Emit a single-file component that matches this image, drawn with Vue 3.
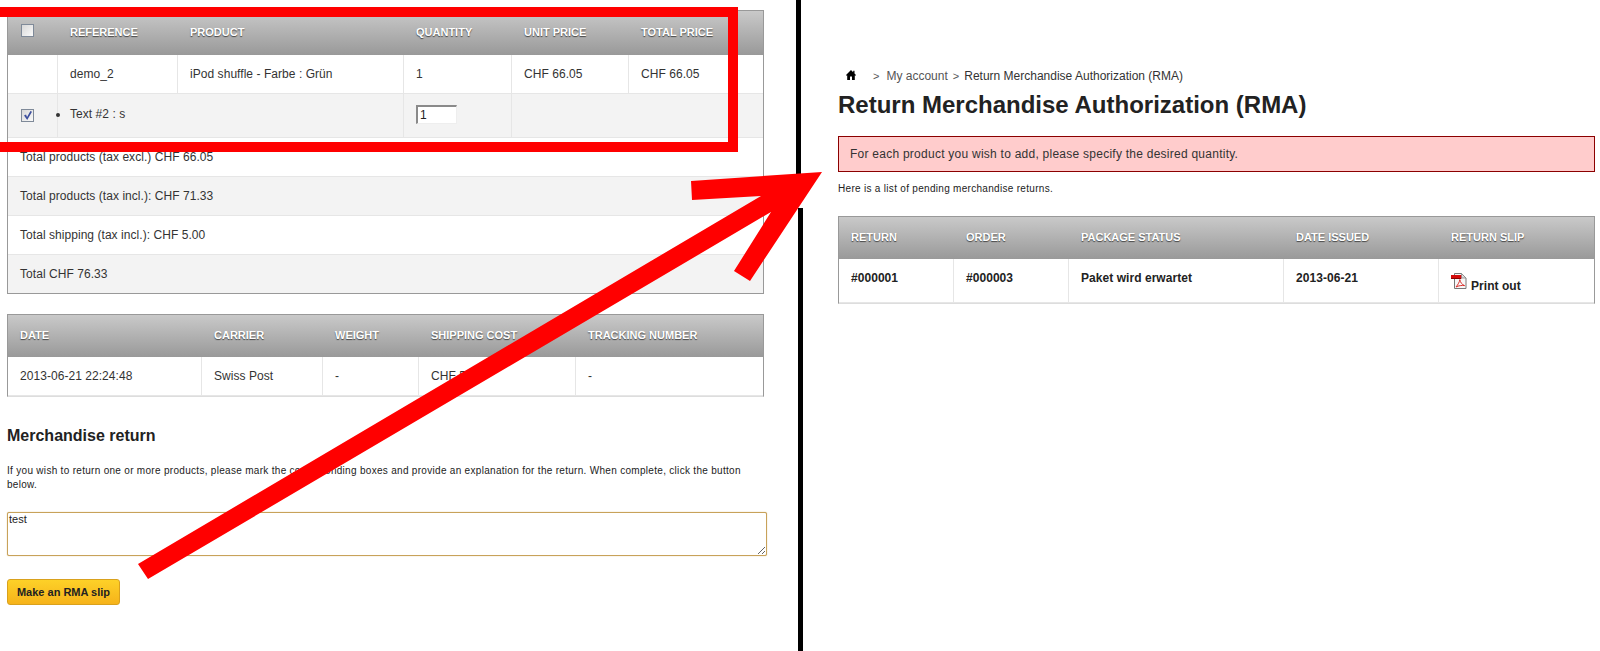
<script setup>
const orderHead = ['Reference', 'Product', 'Quantity', 'Unit price', 'Total price']
const totals = [
  'Total products (tax excl.) CHF 66.05',
  'Total products (tax incl.): CHF 71.33',
  'Total shipping (tax incl.): CHF 5.00',
  'Total CHF 76.33'
]
const shipHead = ['Date', 'Carrier', 'Weight', 'Shipping cost', 'Tracking number']
const shipRow = ['2013-06-21 22:24:48', 'Swiss Post', '-', 'CHF 5.00', '-']
const rmaHead = ['Return', 'Order', 'Package status', 'Date issued', 'Return slip']
const rmaRow = ['#000001', '#000003', 'Paket wird erwartet', '2013-06-21']
</script>

<template>
  <div class="page">
    <section class="left">
      <table class="grid order">
        <colgroup>
          <col class="o1" /><col class="o2" /><col class="o3" /><col class="o4" /><col class="o5" /><col class="o6" />
        </colgroup>
        <thead>
          <tr>
            <th><input type="checkbox" class="check" /></th>
            <th v-for="h in orderHead" :key="h">{{ h }}</th>
          </tr>
        </thead>
        <tbody>
          <tr class="r-main">
            <td></td>
            <td>demo_2</td>
            <td>iPod shuffle - Farbe : Grün</td>
            <td>1</td>
            <td>CHF 66.05</td>
            <td class="last">CHF 66.05</td>
          </tr>
          <tr class="r-custom alt">
            <td><input type="checkbox" class="check" checked /></td>
            <td colspan="2" class="custom"><ul><li>Text #2 : s</li></ul></td>
            <td><input type="text" class="qty" value="1" /></td>
            <td colspan="2" class="last"></td>
          </tr>
          <tr v-for="(t, i) in totals" :key="t" class="r-total" :class="{ alt: i % 2 === 1, end: i === 3 }">
            <td colspan="6" class="last">{{ t }}</td>
          </tr>
        </tbody>
      </table>

      <table class="grid ship">
        <colgroup>
          <col class="s1" /><col class="s2" /><col class="s3" /><col class="s4" /><col class="s5" />
        </colgroup>
        <thead>
          <tr><th v-for="h in shipHead" :key="h">{{ h }}</th></tr>
        </thead>
        <tbody>
          <tr class="r-main">
            <td v-for="(c, i) in shipRow" :key="i" :class="{ last: i === 4 }">{{ c }}</td>
          </tr>
        </tbody>
      </table>

      <h3 class="sub">Merchandise return</h3>
      <p class="note">If you wish to return one or more products, please mark the corresponding boxes and provide an explanation for the return. When complete, click the button below.</p>
      <textarea class="reason">test</textarea>
      <button type="button" class="make">Make an RMA slip</button>
    </section>

    <div class="divider">
      <span class="seg upper"></span>
      <span class="seg lower"></span>
    </div>

    <section class="right">
      <nav class="crumbs">
        <svg class="home" viewBox="0 0 10 10" width="10" height="10">
          <path d="M5 0 L7.2 2.2 V0.8 H8.5 V3.5 L10 5 V5.6 H8.8 V10 H6 V6.6 H4 V10 H1.2 V5.6 H0 V5 Z" fill="#000" />
        </svg>
        <span class="sep first">&gt;</span>
        <a class="acct">My account</a>
        <span class="sep">&gt;</span>
        <span class="here">Return Merchandise Authorization (RMA)</span>
      </nav>
      <h1 class="title">Return Merchandise Authorization (RMA)</h1>
      <div class="alert">For each product you wish to add, please specify the desired quantity.</div>
      <p class="note pending">Here is a list of pending merchandise returns.</p>
      <table class="grid rma">
        <colgroup>
          <col class="m1" /><col class="m2" /><col class="m3" /><col class="m4" /><col class="m5" />
        </colgroup>
        <thead>
          <tr><th v-for="h in rmaHead" :key="h">{{ h }}</th></tr>
        </thead>
        <tbody>
          <tr class="r-rma">
            <td v-for="c in rmaRow" :key="c">{{ c }}</td>
            <td class="last slip">
              <svg class="pdf" viewBox="0 0 16 16" width="16" height="16">
                <path d="M3.5 .5 H10.5 L15 5 V15.5 H3.5 Z" fill="#f7f7f7" stroke="#777" stroke-width="1" />
                <path d="M10.5 .5 V5 H15 Z" fill="#ddd" stroke="#888" stroke-width=".8" />
                <path d="M0 2 H10.2 V6 H0 Z" fill="#d40a0a" />
                <path d="M0 5 H10.2 V6 H0 Z" fill="#8c0000" />
                <path d="M5 14 C7 11.5 8.6 9 8.8 6.6 C9.4 9.5 11 11.6 13.6 12.6 C10.8 12.2 7.6 12.6 5 14 Z" fill="none" stroke="#d9302c" stroke-width="1" />
              </svg>
              <span>Print out</span>
            </td>
          </tr>
        </tbody>
      </table>
    </section>

    <svg class="marks" viewBox="0 0 1600 651" width="1600" height="651">
      <rect x="-20" y="12" width="753" height="135" fill="none" stroke="#f00" stroke-width="10" />
      <polygon
        points="138,564 761,196 692,200 691,181 822,172 750,281 734,271 771,212 148,579"
        fill="#f00"
      />
    </svg>
  </div>
</template>

<style scoped>
.page {
  position: relative;
  display: flex;
  width: 1600px;
  height: 651px;
  overflow: hidden;
  background: #fff;
  color: #222;
  font-family: "Liberation Sans", Arial, sans-serif;
  font-size: 12px;
}
.left {
  width: 789px;
  padding: 10px 0 0 7px;
  flex: none;
  display: flex;
  flex-direction: column;
  align-items: flex-start;
}
.divider {
  width: 7px;
  flex: none;
  display: flex;
  flex-direction: column;
}
.seg { display: block; width: 5px; background: #000; }
.upper { height: 174px; }
.lower { margin: 34px 0 0 2px; flex: 1; }
.right {
  width: 762px;
  padding: 67px 0 0 35px;
  flex: none;
}

.grid {
  table-layout: fixed;
  border-collapse: separate;
  border-spacing: 0;
  border: 1px solid #999;
  border-bottom-color: #ddd;
}
.order { width: 757px; border-bottom-color: #999; }
.ship { width: 757px; margin-top: 20px; }
.rma { width: 757px; margin-top: 20px; }
.o1 { width: 50px; } .o2 { width: 120px; } .o3 { width: 226px; } .o4 { width: 108px; } .o5 { width: 117px; } .o6 { width: 134px; }
.s1 { width: 194px; } .s2 { width: 121px; } .s3 { width: 96px; } .s4 { width: 157px; } .s5 { width: 187px; }
.m1 { width: 115px; } .m2 { width: 115px; } .m3 { width: 215px; } .m4 { width: 155px; } .m5 { width: 155px; }

th {
  height: 44px;
  padding: 0 0 2px 12px;
  text-align: left;
  font-size: 11px;
  font-weight: 700;
  color: #fff;
  text-transform: uppercase;
  text-shadow: 0 1px 1px #444;
  background: linear-gradient(#c9c9c9, #999);
  box-sizing: border-box;
}
.order th:first-child { padding-left: 13px; padding-bottom: 6px; }
.ship th, .rma th { height: 42px; }

td {
  padding: 0 0 0 12px;
  font-size: 12px;
  letter-spacing: .05px;
  box-sizing: border-box;
  border-right: 1px solid #e6e6e6;
  border-bottom: 1px solid #e6e6e6;
  color: #333;
}
td.last { border-right: 0; }
.alt td { background: #f3f3f3; }
.r-main td { height: 39px; }
.r-custom td { height: 44px; }
.r-total td { height: 39px; }
.r-total.end td { height: 38px; border-bottom: 0; }
.r-rma td { height: 44px; font-weight: 700; color: #222; padding-bottom: 6px; }
.r-rma td.slip { padding: 5px 0 0 12px; }
.slip { white-space: nowrap; }
.slip span { vertical-align: top; display: inline-block; margin: 6px 0 0 4px; }
.pdf { vertical-align: top; }

.r-custom td:first-child { padding-left: 13px; }
.custom ul { margin: 0 0 3px; padding: 0; list-style: disc outside; }
.custom li { margin: 0; }

.check {
  appearance: none;
  display: block;
  margin: 0;
  width: 13px;
  height: 13px;
  border: 1px solid #7f8a99;
  background: linear-gradient(135deg, #d8d8d8, #fafafa);
  position: relative;
}
.check:checked::before {
  content: "";
  position: absolute;
  left: 2px;
  top: 1px;
  width: 8px;
  height: 9px;
  background: #3d4f9e;
  clip-path: polygon(0 50%, 25% 40%, 38% 68%, 80% 0, 100% 8%, 40% 100%);
}
.qty {
  box-sizing: border-box;
  display: block;
  width: 41px;
  height: 19px;
  margin-bottom: 3px;
  padding: 0 0 0 2px;
  border-width: 2px 1px 1px 2px;
  border-style: solid;
  border-color: #8a8a8a #eee #eee #8a8a8a;
  background: #fff;
  font-family: "Liberation Sans", Arial, sans-serif;
  font-size: 12px;
  color: #222;
  outline: 0;
}

.sub {
  margin: 29px 0 0;
  font-size: 16px;
  line-height: 20px;
  font-weight: 700;
  color: #222;
}
.note {
  margin: 18px 0 0;
  font-size: 10px;
  line-height: 14px;
  letter-spacing: .3px;
  color: #222;
  width: 757px;
}
.reason {
  box-sizing: border-box;
  display: block;
  width: 760px;
  height: 44px;
  margin: 20px 0 0;
  padding: 0 0 0 1px;
  border: 1px solid #c8a25a;
  box-shadow: 0 0 1px #c8a25a;
  border-radius: 2px;
  background: #fff;
  font-family: "Liberation Sans", Arial, sans-serif;
  font-size: 11px;
  color: #222;
  outline: 0;
}
.make {
  box-sizing: border-box;
  width: 113px;
  height: 26px;
  margin-top: 23px;
  padding: 0;
  border: 1px solid #d9a11d;
  border-radius: 3px;
  background: linear-gradient(#fdd128, #f6b31a);
  font-family: "Liberation Sans", Arial, sans-serif;
  font-size: 11px;
  font-weight: 700;
  color: #222;
}

.crumbs {
  display: flex;
  align-items: center;
  height: 18px;
  padding-left: 8px;
  color: #333;
}
.home { flex: none; margin-bottom: 3px; }
.sep { margin: 0 5px 0 5px; font-size: 11px; color: #555; }
.sep.first { margin-left: 17px; margin-right: 7px; }
.acct { color: #555; }
.title {
  margin: 5px 0 0;
  font-size: 24px;
  line-height: 30px;
  font-weight: 700;
  color: #222;
}
.alert {
  box-sizing: border-box;
  width: 757px;
  height: 36px;
  margin-top: 16px;
  padding: 0 0 0 11px;
  display: flex;
  align-items: center;
  border: 1px solid #8b0000;
  background: #fcc;
  letter-spacing: .25px;
  color: #333;
}
.pending { margin-top: 10px; }

.marks {
  position: absolute;
  left: 0;
  top: 0;
  pointer-events: none;
}
</style>

<style>
html, body { margin: 0; background: #fff; }
</style>
